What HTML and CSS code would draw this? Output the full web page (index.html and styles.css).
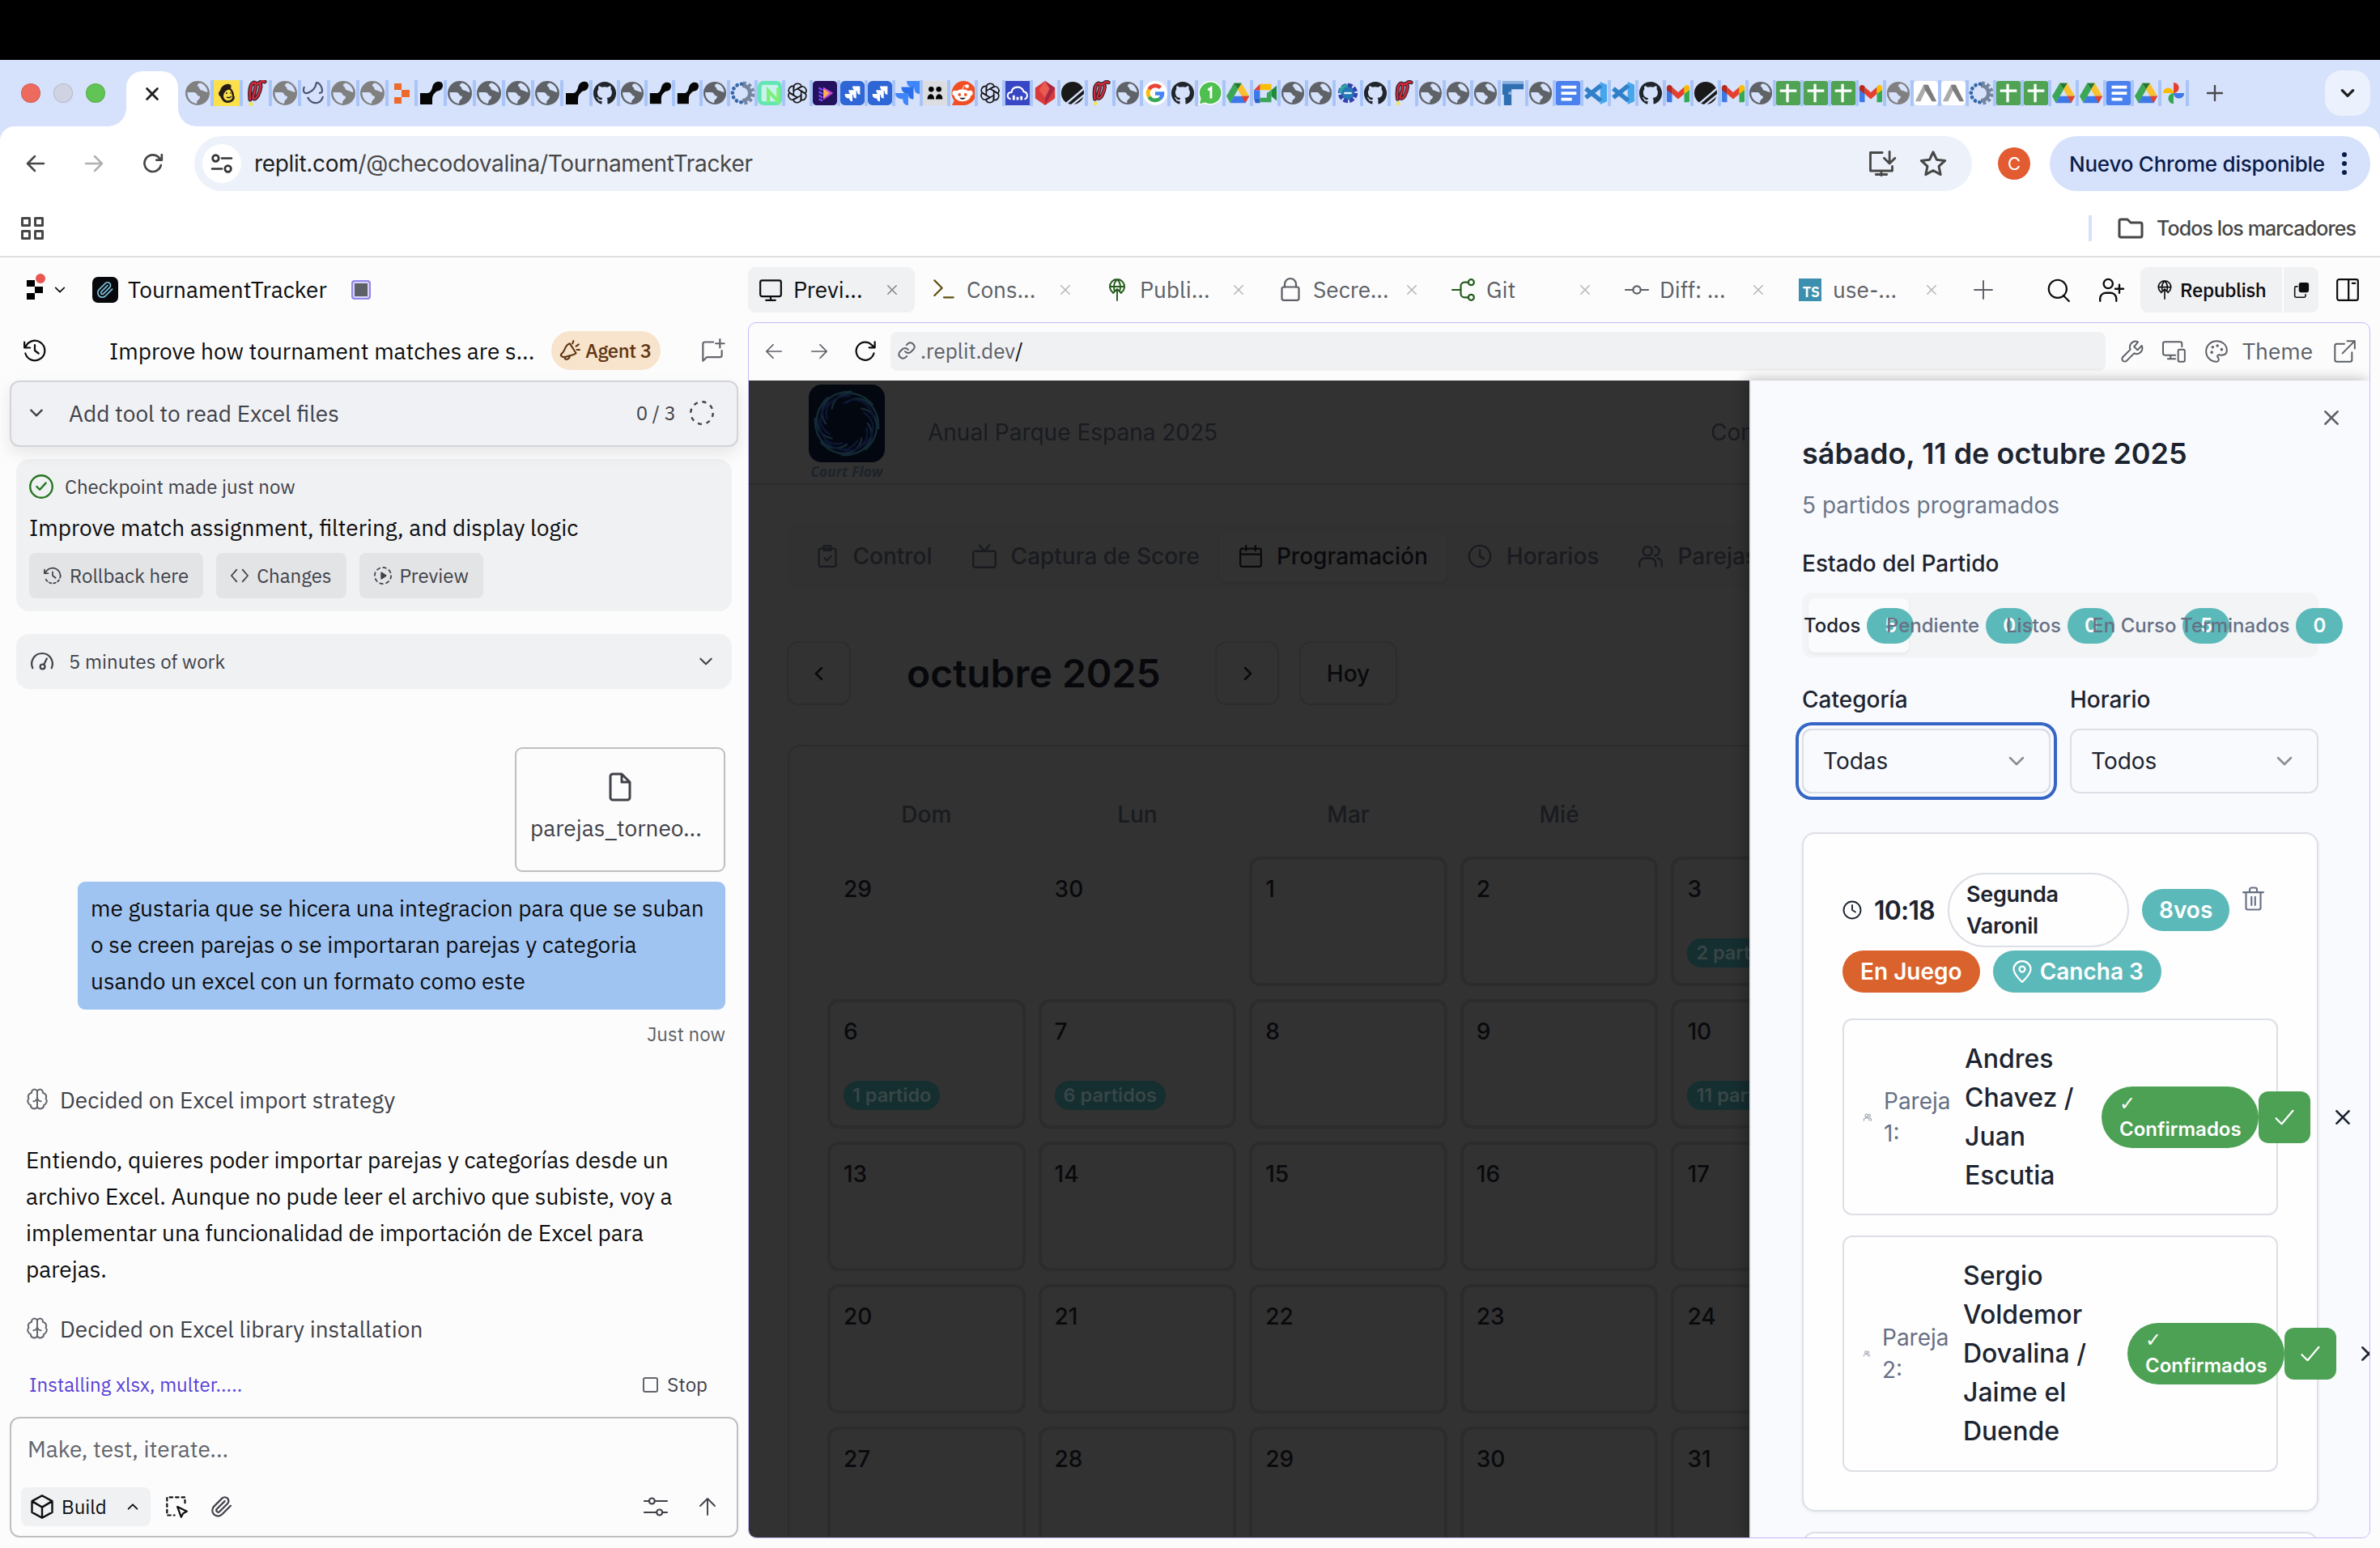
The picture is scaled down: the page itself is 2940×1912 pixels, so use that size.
FILE: index.html
```html
<!DOCTYPE html>
<html lang="es">
<head>
<meta charset="utf-8">
<title>TournamentTracker - Replit</title>
<link rel="stylesheet" href="styles.css">
</head>
<body>
<svg class="defs" aria-hidden="true">
  <symbol id="f-globe" viewBox="0 0 32 32"><circle cx="16" cy="16" r="15" fill="#5f6368"/><path d="M3.500 15h8c4 0 3 4 6 4.500 3 .5 1 4-1 5-1.500 1-1 3-1.500 4.500C8 28 3 22 3.500 15zM19 3.500c-3 1-4 3-2 4.500s1 4 4 4.500 4 2 7.500 2.500C28 9 24 4.500 19 3.500z" fill="#d6e1fb"/></symbol>
  <symbol id="f-globe2" viewBox="0 0 32 32"><circle cx="16" cy="16" r="15" fill="#808080"/><path d="M3.500 15h8c4 0 3 4 6 4.500 3 .5 1 4-1 5-1.500 1-1 3-1.500 4.500C8 28 3 22 3.500 15zM19 3.500c-3 1-4 3-2 4.500s1 4 4 4.500 4 2 7.500 2.500C28 9 24 4.500 19 3.500z" fill="#d6e1fb"/></symbol>
  <symbol id="f-chimp" viewBox="0 0 32 32"><path d="M0 0h32v32H0z" fill="#fbe04b"/><path d="M8 20c-3-2-2-6 0-7 1-5 6-9 11-8 3 0 3 3 2 5 3 3 4 6 4 9 3 4-2 9-8 9-5 0-7-4-9-8z" fill="#241c15"/><path d="M12 19c1-5 5-8 8-7 2 2 2 5 3 8 1 3-3 6-7 5-3-1-4-3-4-6z" fill="#fbe04b"/><path d="M15 16h2M20 16h1M16 21c2 1 4 1 6-1" stroke="#241c15" stroke-width="1.500" fill="none"/></symbol>
  <symbol id="f-pin" viewBox="0 0 32 32"><path d="M9 24C8 15 9 6 12 4c3-3 5 1 3 8s-4 11-1 11 7-7 8-15c0-4-3-5-6-3m5-2c2-2 4-2 6-1" stroke="#30242a" stroke-width="5" fill="none" stroke-linecap="round"/><path d="M9 24C8 15 9 6 12 4c3-3 5 1 3 8s-4 11-1 11 7-7 8-15c0-4-3-5-6-3m5-2c2-2 4-2 6-1" stroke="#d5283c" stroke-width="2.500" fill="none" stroke-linecap="round"/><circle cx="10" cy="29.500" r="2.500" fill="#f1e64a"/></symbol>
  <symbol id="f-curve" viewBox="0 0 32 32"><path d="M4 8c-3 7 1 10 6 7 5-2 8-7 9-12 4 0 7 6 7 10 0 3-2 3-4 3M8 21c2 5 7 8 12 7 4-1 6-4 7-8" stroke="#4b5678" stroke-width="2.200" fill="none"/></symbol>
  <symbol id="f-replit" viewBox="0 0 32 32"><path d="M7 4h9v8H7zM16 12h10v9H16zM7 21h9v8H7z" fill="#ec6a2c"/></symbol>
  <symbol id="f-hook" viewBox="0 0 32 32"><path d="M3 16h9c3 0 5-3 6-7 1-5 5-8 9-7 4 0 5 5 3 8-2 4-5 2-8 5-2 2-4 4-4 8v7H3z" fill="#050505"/></symbol>
  <symbol id="f-github" viewBox="0 0 32 32"><path d="M16 1C7.500 1 1 8 1 16c0 7 4.300 12.400 10.200 14.500.8.100 1-.4 1-.8v-3.200c-4 .9-5-1.800-5-1.800-.7-1.700-1.700-2.200-1.700-2.200-1.300-.9.100-.9.100-.9 1.500.1 2.300 1.600 2.300 1.600 1.300 2.300 3.500 1.600 4.300 1.200.1-1 .5-1.600.9-2-3.300-.4-6.800-1.700-6.800-7.500 0-1.600.6-3 1.600-4-.2-.4-.7-2 .1-4.100 0 0 1.200-.4 4.100 1.500a14 14 0 0 1 7.600 0c2.900-1.900 4.100-1.500 4.100-1.500.8 2.100.3 3.700.1 4.100 1 1 1.600 2.400 1.600 4 0 5.800-3.500 7.100-6.800 7.500.5.500 1 1.400 1 2.800v4.500c0 .4.300.9 1 .8C26.700 28.400 31 23 31 16 31 8 24.500 1 16 1z" fill="#20252b"/></symbol>
  <symbol id="f-gear" viewBox="0 0 32 32"><path d="M16 6a10 10 0 0 1 0 20" fill="none" stroke="#76859e" stroke-width="5"/><path d="M17 3a13 13 0 0 1 0 26" fill="none" stroke="#76859e" stroke-width="5" stroke-dasharray="4 3"/><path d="M15 4a12 12 0 0 0 0 24" fill="none" stroke="#3568a8" stroke-width="5" stroke-linecap="round" stroke-dasharray=".1 6"/></symbol>
  <symbol id="f-neon" viewBox="0 0 32 32"><rect x="2.500" y="2.500" width="27" height="27" rx="5" fill="#c9f2ee" stroke="#62e6b4" stroke-width="5"/><path d="M14 29V13l13 14V9" fill="none" stroke="#7df07a" stroke-width="4.500"/></symbol>
  <symbol id="f-openai" viewBox="0 0 32 32"><g fill="none" stroke="#161616" stroke-width="1.700"><path id="petal" d="M11 19V9c0-7 9-7 10.500-1.500L15 11"/><use href="#petal" transform="rotate(60 16 16)"/><use href="#petal" transform="rotate(120 16 16)"/><use href="#petal" transform="rotate(180 16 16)"/><use href="#petal" transform="rotate(240 16 16)"/><use href="#petal" transform="rotate(300 16 16)"/></g></symbol>
  <symbol id="f-play" viewBox="0 0 32 32"><rect width="32" height="32" rx="5" fill="#23115e"/><path d="M14 8l13 8-13 9z" fill="#c24be0"/><path d="M14 10l8 6-8 7z" fill="#ffb24a"/><path d="M8 9l5 3M8 14l5 3M8 19l5 3M8 24l5 2" stroke="#7b4bef" stroke-width="2.500"/></symbol>
  <symbol id="f-jira" viewBox="0 0 32 32"><rect width="32" height="32" rx="6" fill="#2f66d6"/><path d="M16 7h10v11c-3 0-4-2-4-5-3 0-6-2-6-6zM11 12h10v11c-3 0-4-2-4-5-4 0-6-2-6-6zM6 17h10v10c-3 0-4-2-4-4-4 0-6-2-6-6z" fill="#fff"/></symbol>
  <symbol id="f-jira2" viewBox="0 0 32 32"><path d="M15 0h17v17c-5 0-7-3-7-8-6 0-10-3-10-9z" fill="#3f86fb"/><path d="M8 8h16v16c-5 0-7-3-7-7-5 0-9-3-9-9z" fill="#2c6fea"/><path d="M0 16h17v16c-5 0-7-3-7-8-6 0-10-3-10-8z" fill="#3f86fb"/></symbol>
  <symbol id="f-people" viewBox="0 0 32 32"><rect width="32" height="32" rx="3" fill="#dcdde1"/><circle cx="11" cy="11" r="3.500"/><circle cx="21" cy="11" r="3.500"/><path d="M6 24c0-9 9-9 9 0zM17 24c0-9 9-9 9 0z"/></symbol>
  <symbol id="f-reddit" viewBox="0 0 32 32"><path d="M2 32l3-6A16 16 0 1 1 16 32z" fill="#f04f23"/><circle cx="6" cy="16" r="3.500" fill="#fff"/><circle cx="26" cy="16" r="3.500" fill="#fff"/><ellipse cx="16" cy="19" rx="11" ry="8" fill="#fff"/><circle cx="22" cy="7" r="2.500" fill="#fff"/><path d="M16 11l2-5 4 1" stroke="#fff" fill="none"/><circle cx="12" cy="18" r="2" fill="#f04f23"/><circle cx="20" cy="18" r="2" fill="#f04f23"/><path d="M12 22c2 3 6 3 8 0z" fill="#222"/></symbol>
  <symbol id="f-cloud" viewBox="0 0 32 32"><path d="M0 0h32v32H0z" fill="#3646c4"/><path d="M7 24c-6-2-5-9 1-9 1-9 14-9 16-1 6 1 6 9 1 10" fill="none" stroke="#fff" stroke-width="2.200"/><path d="M11 25v-6M16 25v-4M21 25v-5" stroke="#fff" stroke-width="3"/></symbol>
  <symbol id="f-gem" viewBox="0 0 32 32"><path d="M16 0l13 9v14l-13 9-13-9V9z" fill="#d93a3c"/><path d="M16 0l13 9-8 14-5 9z" fill="#a52846"/><path d="M16 0l6 10-6 12-8-10z" fill="#e95a50"/></symbol>
  <symbol id="f-stripe" viewBox="0 0 32 32"><circle cx="16" cy="16" r="15" fill="#191919"/><path d="M4 33L32 9M12 34L33 17M20 34l14-11" stroke="#d6e1fb" stroke-width="2.500"/></symbol>
  <symbol id="f-google" viewBox="0 0 32 32"><circle cx="16" cy="16" r="16" fill="#fff"/><g fill="none" stroke-width="5"><path d="M8 11a9.500 9.500 0 0 1 15-2" stroke="#ea4335"/><path d="M8 21a9.500 9.500 0 0 1 0-10" stroke="#fbbc05"/><path d="M22 23.500A9.500 9.500 0 0 1 8 21" stroke="#34a853"/><path d="M16 16.500h9.500c0 3-1.500 5.500-3.500 7" stroke="#4285f4"/></g></symbol>
  <symbol id="f-whats" viewBox="0 0 32 32"><path d="M1 31l2-8A15 15 0 1 1 9 29z" fill="#4fbf50" stroke="#fff" stroke-width="1.500"/><path d="M13 12l4-3v14" fill="none" stroke="#fff" stroke-width="3"/></symbol>
  <symbol id="f-drive" viewBox="0 0 32 32"><path d="M11 3h10L10 22l-4 7-5-9z" fill="#3aa757"/><path d="M11 3h10l10 17H21z" fill="#fbc02d"/><path d="M6 29l5-9h20l-5 9z" fill="#3c78e7"/><path d="M21 20h10l-5 9z" fill="#e5402f"/><path d="M11 3l5 8 5-8z" fill="#1e7a3a"/></symbol>
  <symbol id="f-meet" viewBox="0 0 32 32"><path d="M9 4h15v8H9z" fill="#fbbc04"/><path d="M1 12h8v11H1z" fill="#3c78e7"/><path d="M1 12l8-8v8z" fill="#e5402f"/><path d="M1 23h8v6H3z" fill="#2a5fd0"/><path d="M9 22h9v-6l6-4v16H9z" fill="#3aa757"/><path d="M24 12l7-6v20l-7-6z" fill="#1e8a3e"/></symbol>
  <symbol id="f-sim" viewBox="0 0 32 32"><circle cx="16" cy="16" r="9" fill="#2677b5"/><circle cx="16" cy="16" r="10.500" fill="none" stroke="#3340b0" stroke-width="5" stroke-dasharray="6 2.200"/><path d="M6 16a10 10 0 0 1 10-10" stroke="#2aa6a0" stroke-width="4" fill="none"/><path d="M11 16h10" stroke="#e8f4ff" stroke-width="2.500"/></symbol>
  <symbol id="f-tee" viewBox="0 0 32 32"><path d="M2 2h28v9H14v21H4V18H2z" fill="#2e6fb2"/><path d="M2 0h28v4H2zM10 14h4v4h-4z" fill="#8db1de"/></symbol>
  <symbol id="f-docs" viewBox="0 0 32 32"><rect width="32" height="32" rx="3" fill="#4b80ef"/><path d="M7 8h20M7 16h20M7 24h14" stroke="#fff" stroke-width="4"/></symbol>
  <symbol id="f-code" viewBox="0 0 32 32"><path d="M22 1l9 4v22l-9 4z" fill="#45a6ec"/><path d="M23 6L3 22M23 26L3 10" stroke="#2f80c8" stroke-width="6"/></symbol>
  <symbol id="f-gmail" viewBox="0 0 32 32"><path d="M1 8h7v20H3a2 2 0 0 1-2-2z" fill="#3c78e7"/><path d="M24 8h7v18a2 2 0 0 1-2 2h-5z" fill="#34a853"/><path d="M8 8l8 7 8-7v9l-8 7-8-7z" fill="#e5402f"/><path d="M1 9c0-4 4-5 7-2v10l-7-5z" fill="#b8281c"/><path d="M31 9c0-4-4-5-7-2v10l7-5z" fill="#fbbc04"/></symbol>
  <symbol id="f-sheet" viewBox="0 0 32 32"><rect width="32" height="32" rx="3" fill="#4fa353"/><path d="M5 13h22M15 4v24" stroke="#fff" stroke-width="3.500"/></symbol>
  <symbol id="f-peak" viewBox="0 0 32 32"><rect width="32" height="32" rx="5" fill="#fff"/><path d="M2 27L13 5h6L9 27z" fill="#aaa"/><path d="M13 5h6l11 22h-6L15 12z" fill="#7c7c7c"/></symbol>
  <symbol id="f-photos" viewBox="0 0 32 32"><path d="M16 16V2a7 7 0 0 1 0 14z" fill="#e5402f"/><path d="M16 16h14a7 7 0 0 1-14 0z" fill="#3c78e7"/><path d="M16 16v14a7 7 0 0 1 0-14z" fill="#34a853"/><path d="M16 16H2a7 7 0 0 1 14 0z" fill="#fbbc04"/></symbol>

  <symbol id="x" viewBox="0 0 24 24"><path d="M5 5l14 14M19 5L5 19"/></symbol>
  <symbol id="down" viewBox="0 0 24 24"><path d="M4 8l8 8 8-8"/></symbol>
  <symbol id="up" viewBox="0 0 24 24"><path d="M4 16l8-8 8 8"/></symbol>
  <symbol id="left" viewBox="0 0 24 24"><path d="M15 5l-7 7 7 7"/></symbol>
  <symbol id="right" viewBox="0 0 24 24"><path d="M9 5l7 7-7 7"/></symbol>
  <symbol id="arrow-l" viewBox="0 0 24 24"><path d="M22 12H3M11 3l-9 9 9 9"/></symbol>
  <symbol id="arrow-r" viewBox="0 0 24 24"><path d="M2 12h19M13 3l9 9-9 9"/></symbol>
  <symbol id="arrow-u" viewBox="0 0 24 24"><path d="M12 22V3M3 11l9-9 9 9"/></symbol>
  <symbol id="reload" viewBox="0 0 24 24"><path d="M21 14a9.500 9.500 0 1 1-2-8.500L22 8M22 2v6h-6"/></symbol>
  <symbol id="plus" viewBox="0 0 24 24"><path d="M12 1v22M1 12h22"/></symbol>
  <symbol id="history" viewBox="0 0 24 24"><path d="M1 3v6h6M2 9a10.500 10.500 0 1 1 0 6M12 6v6l4 3"/></symbol>
  <symbol id="rollback" viewBox="0 0 24 24"><path d="M1 4v5h5M2 9a10.500 10.500 0 0 1 20.500 3"/><path d="M22.500 12A10.500 10.500 0 0 1 2 15" stroke-dasharray="3 3"/><path d="M12 7v5l4 3"/></symbol>
  <symbol id="clock" viewBox="0 0 24 24"><circle cx="12" cy="12" r="10.500"/><path d="M12 6v6l4 2.500"/></symbol>
  <symbol id="check-c" viewBox="0 0 24 24"><circle cx="12" cy="12" r="11"/><path d="M7.500 12l3 3 6-6.500"/></symbol>
  <symbol id="check" viewBox="0 0 24 24"><path d="M3 13l6 6L21 5"/></symbol>
  <symbol id="brain" viewBox="0 0 24 24"><path d="M12 3C10 0 6 1 6 5 2 6 2 9 3 11c-2 2-1 6 2 7 0 4 5 5 7 2M12 3c2-3 6-2 6 2 4 1 4 4 3 6 2 2 1 6-2 7 0 4-5 5-7 2M12 3v17M8 14c2 0 4-2 4-4 0 2 2 4 4 4"/></symbol>
  <symbol id="clip" viewBox="0 0 24 24"><path d="M21.400 11l-9.200 9.200a6 6 0 0 1-8.500-8.500l8.600-8.600A4 4 0 1 1 18 8.800l-8.600 8.600a2 2 0 0 1-2.800-2.800l8.500-8.500"/></symbol>
  <symbol id="users" viewBox="0 0 24 24"><circle cx="9" cy="7" r="4.500"/><path d="M1 22v-3a5 5 0 0 1 5-5h6a5 5 0 0 1 5 5v3M16 2.500a4.500 4.500 0 0 1 0 9M19 14a5 5 0 0 1 4 5v3"/></symbol>
  <symbol id="globe-up" viewBox="0 0 24 28"><path d="M7 17.500a9 9 0 1 1 10 0M3 10h18M12 1c-6 6-4 12-3 15M12 1c6 6 4 12 3 15M12 13v14M7 18l5-5 5 5"/></symbol>
</svg>

<div class="notch"></div>

<header class="strip">
  <div class="lights"><i class="red"></i><i class="gray"></i><i class="green"></i></div>
  <div class="active-tab"><svg class="ic s22 w2"><use href="#x"/></svg></div>
  <div class="tabs">
    <b class="wide"><svg><use href="#f-globe2"/></svg></b><b class="wide"><svg><use href="#f-chimp"/></svg></b><b class="wide"><svg><use href="#f-pin"/></svg></b><b class="wide"><svg><use href="#f-globe2"/></svg></b><b class="wide"><svg><use href="#f-curve"/></svg></b><b class="wide"><svg><use href="#f-globe2"/></svg></b><b class="wide"><svg><use href="#f-globe2"/></svg></b><b class="wide"><svg><use href="#f-replit"/></svg></b><b class="wide"><svg><use href="#f-hook"/></svg></b><b class="wide"><svg><use href="#f-globe"/></svg></b><b class="wide"><svg><use href="#f-globe"/></svg></b><b class="wide"><svg><use href="#f-globe"/></svg></b><b class="wide"><svg><use href="#f-globe"/></svg></b><b class="wide"><svg><use href="#f-hook"/></svg></b>
    <b><svg><use href="#f-github"/></svg></b><b><svg><use href="#f-globe"/></svg></b><b><svg><use href="#f-hook"/></svg></b><b><svg><use href="#f-hook"/></svg></b><b><svg><use href="#f-globe"/></svg></b><b><svg><use href="#f-gear"/></svg></b><b><svg><use href="#f-neon"/></svg></b><b><svg><use href="#f-openai"/></svg></b><b><svg><use href="#f-play"/></svg></b><b><svg><use href="#f-jira"/></svg></b><b><svg><use href="#f-jira"/></svg></b><b><svg><use href="#f-jira2"/></svg></b><b><svg><use href="#f-people"/></svg></b><b><svg><use href="#f-reddit"/></svg></b><b><svg><use href="#f-openai"/></svg></b><b><svg><use href="#f-cloud"/></svg></b><b><svg><use href="#f-gem"/></svg></b><b><svg><use href="#f-stripe"/></svg></b><b><svg><use href="#f-pin"/></svg></b><b><svg><use href="#f-globe"/></svg></b><b><svg><use href="#f-google"/></svg></b><b><svg><use href="#f-github"/></svg></b><b><svg><use href="#f-whats"/></svg></b><b><svg><use href="#f-drive"/></svg></b><b><svg><use href="#f-meet"/></svg></b><b><svg><use href="#f-globe"/></svg></b><b><svg><use href="#f-globe"/></svg></b><b><svg><use href="#f-sim"/></svg></b><b><svg><use href="#f-github"/></svg></b><b><svg><use href="#f-pin"/></svg></b><b><svg><use href="#f-globe"/></svg></b><b><svg><use href="#f-globe"/></svg></b><b><svg><use href="#f-globe"/></svg></b><b><svg><use href="#f-tee"/></svg></b><b><svg><use href="#f-globe"/></svg></b><b><svg><use href="#f-docs"/></svg></b><b><svg><use href="#f-code"/></svg></b><b><svg><use href="#f-code"/></svg></b><b><svg><use href="#f-github"/></svg></b><b><svg><use href="#f-gmail"/></svg></b><b><svg><use href="#f-stripe"/></svg></b><b><svg><use href="#f-gmail"/></svg></b><b><svg><use href="#f-globe"/></svg></b><b><svg><use href="#f-sheet"/></svg></b><b><svg><use href="#f-sheet"/></svg></b><b><svg><use href="#f-sheet"/></svg></b><b><svg><use href="#f-gmail"/></svg></b><b><svg><use href="#f-globe2"/></svg></b><b><svg><use href="#f-peak"/></svg></b><b><svg><use href="#f-peak"/></svg></b><b><svg><use href="#f-gear"/></svg></b><b><svg><use href="#f-sheet"/></svg></b><b><svg><use href="#f-sheet"/></svg></b><b><svg><use href="#f-drive"/></svg></b><b><svg><use href="#f-drive"/></svg></b><b><svg><use href="#f-docs"/></svg></b><b><svg><use href="#f-drive"/></svg></b><b><svg><use href="#f-photos"/></svg></b>
  </div>
  <svg class="ic new-tab w3"><use href="#plus"/></svg>
  <div class="tab-menu"><svg class="ic s20 w4"><use href="#down"/></svg></div>
</header>

<div class="toolbar-bg">
<div class="toolbar">
  <div class="nav-btns">
    <svg class="ic s24 w25"><use href="#arrow-l"/></svg>
    <svg class="ic s24 w25 dim"><use href="#arrow-r"/></svg>
    <svg class="ic s26 w25"><use href="#reload"/></svg>
  </div>
  <div class="omnibox">
    <span class="site"><svg class="ic s26 w25" viewBox="0 0 24 24"><circle cx="5" cy="6" r="3.500"/><path d="M12 6h11M1 18h11"/><circle cx="19" cy="18" r="3.500"/></svg></span>
    <span class="url">replit.com<em>/@checodovalina/TournamentTracker</em></span>
    <svg class="ic s34 w25 install" viewBox="0 0 32 32"><path d="M17 4H4v20h24v-5M16 24v5M10 28h12M25 3v12M19 10l6 6 6-6"/></svg>
    <svg class="ic s32 w25" viewBox="0 0 24 24"><path stroke-width="2" d="M12 2.500l2.900 6.300 6.900.8-5.100 4.700 1.400 6.800L12 17.700l-6.100 3.400 1.400-6.800-5.100-4.700 6.900-.8z"/></svg>
  </div>
  <span class="avatar">C</span>
  <div class="update"><span>Nuevo Chrome disponible</span><i class="dots"></i></div>
</div>
<div class="bookmarks">
  <svg class="ic s28" viewBox="0 0 28 28"><path stroke-width="3" d="M1.500 1.500h9v9h-9zM17.500 1.500h9v9h-9zM1.500 17.500h9v9h-9zM17.500 17.500h9v9h-9z"/></svg>
  <i class="bar"></i>
  <svg class="ic folder" viewBox="0 0 32 26"><path stroke-width="3" d="M2 23V4a2 2 0 0 1 2-2h8l4 4h12a2 2 0 0 1 2 2v14a2 2 0 0 1-2 2H4a2 2 0 0 1-2-1z"/></svg>
  <span>Todos los marcadores</span>
</div>
</div>

<main class="workspace">
  <section class="chat">
    <div class="app-row">
      <div class="logo"><svg viewBox="0 0 22 32"><path d="M0 8h10v8H0zM10 16h10v8H10zM0 24h10v8H0z"/><circle cx="17" cy="6" r="6" fill="#e95850"/></svg></div>
      <svg class="ic s16 w25"><use href="#down"/></svg>
      <span class="app-icon"><svg class="ic s22 w2"><use href="#clip"/></svg></span>
      <span class="app-name">TournamentTracker</span>
      <i class="stop-box"></i>
    </div>
    <div class="thread-row">
      <svg class="ic s28 w2"><use href="#history"/></svg>
      <span class="thread-name">Improve how tournament matches are s...</span>
      <span class="agent"><svg class="ic s26 w2" viewBox="0 0 24 24"><path d="M2 18c-1-1 0-2 2-4 3-3 2-8 8-10l7 11c-3 3-7 2-11 4-3 1-5 0-6-1zM6 20c0 3 5 3 6-2M15 4l1-3M19 7l3-2M20 11h3"/></svg>Agent 3</span>
      <svg class="ic s28 w2 soft" viewBox="0 0 24 24"><path d="M13 3H4a2 2 0 0 0-2 2v18l4-4h14a2 2 0 0 0 2-2v-5M20 0v9M15.500 4.500h9"/></svg>
    </div>
    <div class="task">
      <svg class="ic s20 w3"><use href="#down"/></svg>
      <span class="task-name">Add tool to read Excel files</span>
      <span class="count">0 / 3</span>
      <svg class="ic s30 w2" viewBox="0 0 24 24"><circle cx="12" cy="12" r="11" stroke-dasharray="4 4.640" stroke-linecap="butt"/></svg>
    </div>
    <div class="checkpoint">
      <div class="cp-head"><svg class="ic s30 w2"><use href="#check-c"/></svg><span>Checkpoint made just now</span></div>
      <p>Improve match assignment, filtering, and display logic</p>
      <div class="cp-btns">
        <span><svg class="ic s22 w2"><use href="#rollback"/></svg>Rollback here</span>
        <span><svg class="ic s22 w2" viewBox="0 0 24 24"><path d="M8 4l-7 8 7 8M16 4l7 8-7 8"/></svg>Changes</span>
        <span><svg class="ic s22 w2" viewBox="0 0 24 24"><circle cx="12" cy="12" r="11" stroke-dasharray="4 4.640"/><path d="M10 8l6 4-6 4z" fill="currentColor"/></svg>Preview</span>
      </div>
    </div>
    <div class="minutes">
      <svg class="ic s28 w2" viewBox="0 0 24 24"><path d="M2 19a11 11 0 1 1 20 0M14 15l3-6"/><circle cx="12.500" cy="17.500" r="2.500"/></svg>
      <span>5 minutes of work</span>
      <svg class="ic s20 w25"><use href="#down"/></svg>
    </div>
    <div class="file">
      <svg class="ic" viewBox="0 0 28 36"><path stroke-width="3" d="M16 2H5a3 3 0 0 0-3 3v26a3 3 0 0 0 3 3h18a3 3 0 0 0 3-3V12zM16 2v10h10"/></svg>
      <span>parejas_torneo...</span>
    </div>
    <div class="bubble">me gustaria que se hicera una integracion para que se suban<br>o se creen parejas o se importaran parejas y categoria<br>usando un excel con un formato como este</div>
    <div class="when">Just now</div>
    <div class="step"><svg class="ic s28 w15"><use href="#brain"/></svg><span>Decided on Excel import strategy</span></div>
    <p class="reply">Entiendo, quieres poder importar parejas y categorías desde un<br>archivo Excel. Aunque no pude leer el archivo que subiste, voy a<br>implementar una funcionalidad de importación de Excel para<br>parejas.</p>
    <div class="step second"><svg class="ic s28 w15"><use href="#brain"/></svg><span>Decided on Excel library installation</span></div>
    <div class="status"><span class="installing">Installing xlsx, multer.....</span><i></i><span>Stop</span></div>
    <div class="composer">
      <div class="placeholder">Make, test, iterate...</div>
      <div class="tools">
        <span class="build"><svg class="ic s30 w2" viewBox="0 0 24 24"><path d="M12 1l10 5.500v11L12 23 2 17.500v-11zM2 6.500l10 6 10-6M12 12.500V23"/></svg><span>Build</span><svg class="ic s16 w3"><use href="#up"/></svg></span>
        <svg class="ic s28 w2 dark" viewBox="0 0 24 24"><path d="M21 8V2H2v19h8" stroke-dasharray="3 3.400"/><path d="M13 12l10 5-4 2-2 4z"/></svg>
        <svg class="ic s28 w2"><use href="#clip"/></svg>
        <svg class="ic s28 w2 push" viewBox="0 0 24 24"><path d="M0 6h5M11 6h13M0 18h13M19 18h5"/><circle cx="8" cy="6" r="3"/><circle cx="16" cy="18" r="3"/></svg>
        <svg class="ic s24 w2"><use href="#arrow-u"/></svg>
      </div>
    </div>
  </section>

  <section class="pane">
    <div class="pane-tabs">
      <div class="ptab on"><svg class="ic s28 w2" viewBox="0 0 24 24"><rect x="1" y="2" width="22" height="17" rx="2"/><path d="M12 19v4M7 23h10"/></svg><span>Previ...</span><svg class="ic s18 w2 close"><use href="#x"/></svg></div>
      <div class="ptab"><svg class="ic s28 w2 olive" viewBox="0 0 24 24"><path d="M2 2l8 8-8 8M12 20h10"/></svg><span>Cons...</span><svg class="ic s18 w2 close"><use href="#x"/></svg></div>
      <div class="ptab"><svg class="ic s28 w2 leaf"><use href="#globe-up"/></svg><span>Publi...</span><svg class="ic s18 w2 close"><use href="#x"/></svg></div>
      <div class="ptab"><svg class="ic s28 w2" viewBox="0 0 24 24"><rect x="3" y="9" width="18" height="14" rx="2"/><path d="M6 9V6a6 6 0 0 1 12 0v3"/></svg><span>Secre...</span><svg class="ic s18 w2 close"><use href="#x"/></svg></div>
      <div class="ptab"><svg class="ic s28 w2 leaf" viewBox="0 0 24 24"><path d="M0 12h9M17 4h-4a4 4 0 0 0-4 4v8a4 4 0 0 0 4 4h4"/><circle cx="20" cy="4" r="3"/><circle cx="20" cy="20" r="3"/></svg><span>Git</span><svg class="ic s18 w2 close"><use href="#x"/></svg></div>
      <div class="ptab"><svg class="ic s28 w2" viewBox="0 0 24 24"><path d="M0 12h8M16 12h8"/><circle cx="12" cy="12" r="4"/></svg><span>Diff: ...</span><svg class="ic s18 w2 close"><use href="#x"/></svg></div>
      <div class="ptab"><b class="ts">TS</b><span>use-...</span><svg class="ic s18 w2 close"><use href="#x"/></svg></div>
      <svg class="ic s24 w2 add"><use href="#plus"/></svg>
      <div class="actions">
        <svg class="ic s28 w2" viewBox="0 0 24 24"><circle cx="11" cy="11" r="9.500"/><path d="M17 18l6 6"/></svg>
        <svg class="ic s30 w2" viewBox="0 0 24 24"><circle cx="9" cy="6" r="4.500"/><path d="M1 23v-3a6 6 0 0 1 6-5h4a6 6 0 0 1 6 5v3M20 7v8M16 11h8"/></svg>
        <span class="republish"><svg class="ic s24 w2"><use href="#globe-up"/></svg>Republish</span>
        <span class="copy"><svg class="ic s20 w2" viewBox="0 0 24 24"><path d="M6 7H4a2 2 0 0 0-2 2v12a2 2 0 0 0 2 2h12a2 2 0 0 0 2-2v-2"/><rect x="9" y="2" width="13" height="13" rx="2" fill="currentColor"/></svg></span>
        <svg class="ic s28 w2" viewBox="0 0 24 24"><rect x="1" y="1" width="22" height="22" rx="2"/><path d="M13 1v22M17 5h3"/></svg>
      </div>
    </div>
    <div class="webview">
      <div class="address">
        <svg class="ic s22 w2"><use href="#arrow-l"/></svg>
        <svg class="ic s22 w2"><use href="#arrow-r"/></svg>
        <svg class="ic s28 w2 black"><use href="#reload"/></svg>
        <div class="path"><svg class="ic s24 w2" viewBox="0 0 24 24"><path d="M10 13a5 5 0 0 0 7.500.5l3-3a5 5 0 0 0-7-7l-1.700 1.700M14 11a5 5 0 0 0-7.500-.5l-3 3a5 5 0 0 0 7 7l1.700-1.700"/></svg><span>.replit.dev<b>/</b></span></div>
        <svg class="ic s28 w15" viewBox="0 0 24 24"><path d="M15 6a1 1 0 0 0 0 2l1.500 1.500a1 1 0 0 0 2 0L22 6a6 6 0 0 1-8 8l-8 8a2.500 2.500 0 0 1-4-4l8-8a6 6 0 0 1 8-8z"/></svg>
        <svg class="ic s28 w15" viewBox="0 0 24 24"><path d="M20 7V4a2 2 0 0 0-2-2H2a2 2 0 0 0-2 2v10a2 2 0 0 0 2 2h11M8 16v4M5 20h8"/><rect x="16" y="10" width="7" height="13" rx="1.500"/></svg>
        <svg class="ic s28 w15" viewBox="0 0 24 24"><path d="M12 23C6 23 1 18 1 12S6 1 12 1s11 4 11 10c0 4-3 5-6 5-4-1-5 1-3 3 1 2 0 4-2 4z"/><circle cx="7" cy="13" r=".7"/><circle cx="8" cy="7.500" r=".7"/><circle cx="13" cy="6" r=".7"/><circle cx="17.500" cy="10" r=".7"/></svg>
        <span class="theme">Theme</span>
        <svg class="ic s28 w15" viewBox="0 0 24 24"><path d="M12 4H4a2 2 0 0 0-2 2v15a2 2 0 0 0 2 2h14a2 2 0 0 0 2-2v-8M15 1h8v8M10 14L23 1"/></svg>
      </div>
      <div class="stage">
        <div class="site-page">
          <div class="site-head">
            <div class="brand">
              <svg viewBox="0 0 94 96"><rect width="94" height="96" rx="16" fill="#03070f"/><g fill="none" stroke-linecap="round"><path id="arm" d="M47 22C66 8 88 28 86 54" stroke="#132a35" stroke-width="2.500"/><use href="#arm" transform="rotate(45 47 48)"/><use href="#arm" transform="rotate(90 47 48)"/><use href="#arm" transform="rotate(135 47 48)"/><use href="#arm" transform="rotate(180 47 48)"/><use href="#arm" transform="rotate(225 47 48)"/><use href="#arm" transform="rotate(270 47 48)"/><use href="#arm" transform="rotate(315 47 48)"/><path id="arm2" d="M44 23C58 14 74 20 80 40" stroke="#0d1633" stroke-width="2.500"/><use href="#arm2" transform="rotate(65 47 48)"/><use href="#arm2" transform="rotate(110 47 48)"/><use href="#arm2" transform="rotate(155 47 48)"/><use href="#arm2" transform="rotate(200 47 48)"/><use href="#arm2" transform="rotate(245 47 48)"/><use href="#arm2" transform="rotate(290 47 48)"/></g></svg>
              <span>Court Flow</span>
            </div>
            <span class="club">Anual Parque Espana 2025</span>
            <span class="right-link">Control</span>
          </div>
          <div class="site-nav">
            <span><svg class="ic s28 w2" viewBox="0 0 24 24"><rect x="3" y="4" width="18" height="19" rx="2"/><rect x="8" y="1" width="8" height="5" rx="1"/><path d="M9 14l2.500 2.500L16 12"/></svg>Control</span>
            <span><svg class="ic s30 w2" viewBox="0 0 24 24"><rect x="1" y="7" width="22" height="16" rx="2"/><path d="M7 1l5 6 5-6"/></svg>Captura de Score</span>
            <span class="cur"><svg class="ic s28 w2" viewBox="0 0 24 24"><rect x="1" y="4" width="22" height="19" rx="2"/><path d="M1 10h22M7 1v5M17 1v5"/></svg>Programación</span>
            <span><svg class="ic s30 w2"><use href="#clock"/></svg>Horarios</span>
            <span><svg class="ic s30 w2"><use href="#users"/></svg>Parejas</span>
          </div>
          <div class="month">
            <span class="mbtn"><svg class="ic s24 w25"><use href="#left"/></svg></span>
            <h2>octubre 2025</h2>
            <span class="mbtn"><svg class="ic s24 w25"><use href="#right"/></svg></span>
            <span class="mbtn today">Hoy</span>
          </div>
          <div class="calendar">
            <div class="grid days"><span>Dom</span><span>Lun</span><span>Mar</span><span>Mié</span><span>Jue</span><span>Vie</span><span>Sáb</span></div>
            <div class="grid cells">
              <div class="day out">29</div><div class="day out">30</div><div class="day">1</div><div class="day">2</div><div class="day">3<em>2 partidos</em></div><div class="day">4</div><div class="day">5</div>
              <div class="day">6<em>1 partido</em></div><div class="day">7<em>6 partidos</em></div><div class="day">8</div><div class="day">9</div><div class="day">10<em>11 partidos</em></div><div class="day">11</div><div class="day">12</div>
              <div class="day">13</div><div class="day">14</div><div class="day">15</div><div class="day">16</div><div class="day">17</div><div class="day">18</div><div class="day">19</div>
              <div class="day">20</div><div class="day">21</div><div class="day">22</div><div class="day">23</div><div class="day">24</div><div class="day">25</div><div class="day">26</div>
              <div class="day">27</div><div class="day">28</div><div class="day">29</div><div class="day">30</div><div class="day">31</div><div class="day out">1</div><div class="day out">2</div>
            </div>
          </div>
        </div>
        <aside class="sheet">
          <div class="sheet-close"><svg class="ic s26 w25"><use href="#x"/></svg></div>
          <h1>sábado, 11 de octubre 2025</h1>
          <p class="sub">5 partidos programados</p>
          <div class="label">Estado del Partido</div>
          <div class="states">
            <div class="sel"><span>Todos</span><b>5</b></div>
            <div><span>Pendiente</span><b>0</b></div>
            <div><span>Listos</span><b>0</b></div>
            <div><span>En Curso</span><b>5</b></div>
            <div><span>Terminados</span><b>0</b></div>
          </div>
          <div class="filters">
            <div><div class="label">Categoría</div><div class="select focus">Todas<svg class="ic s24 w25"><use href="#down"/></svg></div></div>
            <div><div class="label">Horario</div><div class="select">Todos<svg class="ic s24 w25"><use href="#down"/></svg></div></div>
          </div>
          <article class="match">
            <div class="m-row">
              <svg class="ic s24 w2"><use href="#clock"/></svg>
              <strong>10:18</strong>
              <span class="pill outline">Segunda Varonil</span>
              <span class="pill teal round">8vos</span>
              <svg class="ic trash w2" viewBox="0 0 24 26"><path d="M1 6h22M4 6v17a2 2 0 0 0 2 2h12a2 2 0 0 0 2-2V6M8 6V3a2 2 0 0 1 2-2h4a2 2 0 0 1 2 2v3M10 11v9M14 11v9"/></svg>
            </div>
            <div class="m-row2">
              <span class="pill orange">En Juego</span>
              <span class="pill teal"><svg class="ic s28 w2" viewBox="0 0 24 24"><path d="M12 23S3 15 3 9.500a9 8.500 0 0 1 18 0C21 15 12 23 12 23z"/><circle cx="12" cy="9.500" r="3"/></svg>Cancha 3</span>
            </div>
            <div class="pair">
              <svg class="ic s10 w2"><use href="#users"/></svg>
              <span class="who">Pareja<br>1:</span>
              <span class="names">Andres<br>Chavez /<br>Juan<br>Escutia</span>
              <span class="conf"><i>✓</i>Confirmados</span>
              <span class="ok"><svg class="ic s28 w2"><use href="#check"/></svg></span>
              <span class="no"><svg class="ic s26 w25"><use href="#x"/></svg></span>
            </div>
            <div class="pair two">
              <svg class="ic s10 w2"><use href="#users"/></svg>
              <span class="who">Pareja<br>2:</span>
              <span class="names">Sergio<br>Voldemor<br>Dovalina /<br>Jaime el<br>Duende</span>
              <span class="conf"><i>✓</i>Confirmados</span>
              <span class="ok"><svg class="ic s28 w2"><use href="#check"/></svg></span>
              <span class="no"><svg class="ic s26 w25"><use href="#x"/></svg></span>
            </div>
          </article>
          <article class="match next"></article>
        </aside>
      </div>
    </div>
  </section>
</main>
</body>
</html>
```
FILE: styles.css
```css
* { box-sizing: border-box; margin: 0; padding: 0; }
body { width: 2940px; height: 1912px; overflow: hidden; display: flex; flex-direction: column; background: #fcfcfc; font-family: Inter, "Liberation Sans", sans-serif; color: #1f1f1f; }
em, i, b { font-style: normal; }
.defs { position: absolute; width: 0; height: 0; }

/* icon sizes and stroke weights */
.ic { flex: none; fill: none; stroke: currentColor; stroke-width: 2; stroke-linecap: round; stroke-linejoin: round; overflow: visible; }
.s10 { width: 10px; height: 12px; } .s16 { width: 16px; height: 16px; } .s18 { width: 18px; height: 18px; }
.s20 { width: 20px; height: 20px; } .s22 { width: 22px; height: 22px; } .s24 { width: 24px; height: 24px; }
.s26 { width: 26px; height: 26px; } .s28 { width: 28px; height: 28px; } .s30 { width: 30px; height: 30px; }
.s32 { width: 36px; height: 36px; } .s34 { width: 36px; height: 36px; }
.w15 { stroke-width: 1.700; } .w2 { stroke-width: 1.900; } .w25 { stroke-width: 2.500; } .w3 { stroke-width: 2.800; } .w4 { stroke-width: 4; }

/* browser chrome */
.notch { height: 74px; background: #000; flex: none; }
.strip { height: 82px; flex: none; background: #d6e1fb; display: flex; align-items: center; padding-right: 12px; }
.lights { display: flex; gap: 16px; padding-left: 26px; width: 156px; }
.lights i { width: 24px; height: 24px; border-radius: 50%; border: 1px solid rgba(0,0,0,.12); }
.red { background: #ed6a5e; } .gray { background: #d0d4e2; } .green { background: #61c454; }
.active-tab { width: 64px; height: 68px; align-self: flex-end; background: #fff; border-radius: 20px 20px 0 0; display: flex; align-items: center; justify-content: center; padding-bottom: 12px; position: relative; }
.active-tab .ic { stroke-width: 3; }
.active-tab::before, .active-tab::after { content: ""; position: absolute; bottom: 0; width: 22px; height: 22px; }
.active-tab::before { right: 100%; background: radial-gradient(circle at 0 0, transparent 21.500px, #fff 22px); }
.active-tab::after { left: 100%; background: radial-gradient(circle at 100% 0, transparent 21.500px, #fff 22px); }
.tabs { display: flex; margin-left: 8px; }
.tabs b { width: 34px; height: 32px; border-right: 4px solid #a9c5f8; display: block; }
.tabs b.wide { width: 36px; }
.tabs svg { width: 100%; height: 32px; display: block; }
.new-tab { width: 20px; height: 20px; margin-left: 22px; color: #47484c; }
.tab-menu { margin-left: auto; width: 56px; height: 56px; border-radius: 20px; background: #ebf1fd; display: flex; align-items: center; justify-content: center; }
.toolbar-bg { background: #d6e1fb; height: 162px; flex: none; }
.toolbar { height: 92px; background: #fff; border-radius: 18px 18px 0 0; display: flex; align-items: center; padding-right: 12px; color: #474747; }
.nav-btns { width: 240px; padding-left: 32px; display: flex; gap: 48px; align-items: center; }
.nav-btns .dim { color: #b0b0b0; }
.omnibox { width: 2196px; height: 68px; border-radius: 34px; background: #edf1fa; display: flex; align-items: center; padding: 0 30px 0 10px; }
.site { width: 48px; height: 48px; border-radius: 50%; background: #fff; color: #333; display: flex; align-items: center; justify-content: center; margin-right: 16px; }
.url { font-size: 28px; letter-spacing: -.32px; flex: 1; color: #1f1f1f; }
.url em { color: #474747; }
.install { margin-right: 28px; }
.avatar { width: 40px; height: 40px; border-radius: 50%; background: #e25b31; color: #fff; font-size: 22px; display: flex; align-items: center; justify-content: center; margin: 0 24px 0 32px; }
.update { width: 396px; height: 68px; border-radius: 34px; background: #d6e1fb; color: #0b1c4a; display: flex; align-items: center; justify-content: space-between; padding: 0 29px 0 24px; font-size: 26px; font-weight: 500; letter-spacing: -.22px; }
.dots { width: 6px; height: 6px; border-radius: 50%; background: currentColor; box-shadow: 0 -11px, 0 11px; }
.bookmarks { height: 70px; background: #fff; border-bottom: 2px solid #dfdfe0; display: flex; align-items: center; padding: 0 29px 0 26px; color: #474747; font-size: 25px; font-weight: 500; }
.bar { width: 4px; height: 32px; margin-left: auto; background: #d6e1fb; }
.folder { width: 32px; height: 26px; margin: 0 16px 0 32px; }
.bookmarks span { white-space: nowrap; width: 247px; letter-spacing: -.9px; }

/* assistant column */
.workspace { flex: 1; display: flex; min-height: 0; }
.chat { width: 924px; padding: 0 12px; display: flex; flex-direction: column; font-family: "IBM Plex Sans", "Noto Sans", sans-serif; color: #0c0d0f; font-size: 28px; white-space: nowrap; }
.app-row { height: 79px; display: flex; align-items: center; padding-left: 21px; }
.logo { width: 33px; height: 32px; margin-top: -8px; }
.logo svg { width: 22px; height: 32px; display: block; overflow: visible; }
.app-icon { width: 32px; height: 32px; border-radius: 7px; background: #07090c; color: #7fbdd8; margin: 0 12px 0 32px; display: flex; align-items: center; justify-content: center; }
.app-name { width: 276px; }
.stop-box { width: 24px; height: 24px; border-radius: 4px; background: #5e6068; border: 2px solid #9386ee; box-shadow: inset 0 0 0 2px #d8d4f8; }
.thread-row { height: 73px; display: flex; align-items: center; padding: 0 0 1px 17px; }
.thread-name { margin-left: 78px; width: 546px; }
.agent { width: 135px; height: 48px; border-radius: 24px; background: #f8e3cc; color: #5e3511; display: flex; align-items: center; gap: 6px; padding-left: 10px; font-size: 24px; letter-spacing: -.4px; font-weight: 500; }
.thread-row .soft { margin-left: 50px; color: #64666d; }
.task { height: 82px; flex: none; background: #f0f1f4; border: 2px solid #d2d4d8; border-radius: 12px; box-shadow: 0 8px 20px rgba(0,0,0,.09); display: flex; align-items: center; padding: 0 28px 2px 21px; color: #404249; z-index: 1; }
.task-name { margin-left: 30px; flex: 1; }
.count { margin-right: 17px; font-size: 24px; }
.checkpoint { margin: 15px 8px 0; height: 188px; background: #f0f1f3; border-radius: 16px; padding: 14px 16px; color: #404249; }
.cp-head { display: flex; align-items: center; gap: 14px; height: 40px; font-size: 24px; }
.cp-head .ic { color: #24751f; }
.checkpoint p { color: #0c0d0f; height: 62px; line-height: 61px; }
.cp-btns { display: flex; gap: 16px; }
.cp-btns span { height: 56px; background: #e3e4e6; border-radius: 8px; display: flex; align-items: center; gap: 10px; padding: 0 18px; font-size: 24px; }
.minutes { margin: 28px 8px 0; height: 68px; background: #f0f1f3; border-radius: 16px; display: flex; align-items: center; padding: 0 22px 0 18px; color: #404249; font-size: 24px; }
.minutes span { flex: 1; margin-left: 19px; }
.file { margin: 72px 16px 0 auto; width: 260px; height: 154px; border: 2.500px solid #bfbfc0; border-radius: 9px; padding: 29px 17px 0; color: #404249; }
.file .ic { width: 28px; height: 36px; display: block; margin: 0 auto 14px; }
.bubble { margin: 12px 16px 0 auto; width: 800px; height: 158px; background: #a0c4f2; border-radius: 9px; padding: 11px 16px; line-height: 44.800px; }
.when { margin: 14px 16px 0 auto; line-height: 32px; font-size: 24px; color: #5c5f66; }
.step { margin: 45px 0 0 20px; height: 40px; display: flex; align-items: center; gap: 14px; color: #404249; }
.step .ic { color: #62656c; }
.reply { margin: 32px 0 0 20px; line-height: 45px; }
.step.second { margin-top: 31px; }
.status { margin: 29px 38px 0 24px; height: 40px; display: flex; align-items: center; font-size: 24px; color: #404249; }
.installing { color: #5a41d6; flex: 1; }
.status i { width: 19px; height: 19px; border: 2px solid #62656c; border-radius: 3px; margin-right: 11px; }
.composer { margin-top: 20px; height: 149px; flex: none; border: 2.500px solid #bfbfc0; border-radius: 12px; padding: 18px 12px 0; color: #404249; }
.placeholder { height: 40px; line-height: 40px; padding-left: 8px; color: #62656c; }
.tools { display: flex; align-items: center; height: 48px; margin-top: 27px; padding-right: 12px; }
.build { width: 160px; height: 48px; border-radius: 8px; background: #f0f1f3; color: #0c0d0f; display: flex; align-items: center; padding: 0 14px 0 11px; font-size: 24px; margin-right: 18px; }
.build span { flex: 1; margin-left: 9px; }
.dark { color: #0c0d0f; margin-right: 28px; }
.push { margin: 0 38px 0 auto; }

/* workspace pane */
.pane { width: 2004px; font-family: "IBM Plex Sans", "Noto Sans", sans-serif; white-space: nowrap; color: #5c5f66; }
.pane-tabs { height: 80px; display: flex; align-items: center; }
.ptab { width: 206px; height: 56px; margin-right: 8px; border-radius: 9px; display: flex; align-items: center; padding: 0 19px 0 14px; font-size: 28px; }
.ptab span { flex: 1; margin: -2px 0 0 14px; min-width: 0; }
.ptab .close { color: #b4b5b8; }
.ptab.on { background: #f0f1f3; color: #0c0d0f; }
.ptab.on .close { color: #808288; }
.olive { color: #5f4d0c; } .leaf { color: #245c1d; }
.ts { width: 28px; height: 28px; background: #3c8fae; color: #fff; font: 600 18px/34px "IBM Plex Sans", "Noto Sans", sans-serif; text-align: right; padding-right: 2px; overflow: hidden; }
.add { margin-left: 16px; }
.actions { margin-left: auto; display: flex; align-items: center; color: #0c0d0f; padding-right: 14px; }
.actions > .ic:first-child { margin-right: 36px; }
.actions > .ic:nth-child(2) { margin-right: 21px; }
.republish { width: 175px; height: 56px; background: #f0f1f3; border-radius: 9px 0 0 9px; display: flex; align-items: center; gap: 7px; padding-left: 18px; font-size: 24px; letter-spacing: -.4px; font-weight: 500; }
.copy { width: 43px; height: 56px; background: #f0f1f3; border-radius: 0 9px 9px 0; margin: 0 22px 0 2px; display: flex; align-items: center; justify-content: center; }
.webview { height: 1502px; border: 1px solid #c3bbfb; border-radius: 10px; overflow: hidden; background: #fcfcfc; }
.address { height: 71px; display: flex; align-items: center; padding: 0 17px 1px 20px; }
.address .ic:nth-child(2) { margin: 0 32px 0 34px; }
.black { color: #0c0d0f; }
.path { width: 1501px; height: 48px; background: #f0f1f3; border-radius: 8px; margin: 0 19px 0 17px; display: flex; align-items: center; gap: 5px; padding: 0 0 2px 8px; font-size: 26px; }
.path b { color: #0c0d0f; font-weight: 400; }
.address > .path + .ic { margin-right: 24px; }
.address > .path + .ic + .ic { margin-right: 24px; }
.theme { flex: 1; margin: -2px 0 0 18px; font-size: 28px; }

/* dimmed tournament page */
.stage { display: flex; height: 1430px; font-family: Inter, sans-serif; }
.site-page { width: 1236px; background: #323232; overflow: hidden; color: #090a0d; font-size: 28px; font-weight: 500; }
.site-page > * { width: 2002px; }
.site-head { height: 129px; border-bottom: 2px solid #2b2b2c; display: flex; color: #191b20; font-weight: 400; }
.brand { margin: 5px 0 0 74px; width: 94px; }
.brand svg { width: 94px; height: 96px; display: block; }
.brand span { display: block; font: italic 700 17px/24px "Open Sans", sans-serif; color: #1c232b; letter-spacing: .3px; text-align: center; }
.club { margin-left: 53px; line-height: 128px; width: 967px; }
.right-link { line-height: 128px; }
.site-nav { margin: 49px 0 0 47px; height: 78px; border-radius: 12px; background: #313131; display: flex; align-items: center; padding-left: 11px; color: #191b20; }
.site-nav span { display: flex; align-items: center; gap: 18px; height: 64px; padding: 0 24.500px; }
.site-nav .cur { background: #323232; border-radius: 8px; color: #090a0d; box-shadow: 0 1px 2px rgba(0,0,0,.12); }
.month { margin: 66px 0 0 47px; display: flex; height: 79px; }
.month h2 { width: 450px; padding-left: 69px; line-height: 79px; font-size: 48px; font-weight: 600; color: #07080b; }
.mbtn { width: 79px; height: 79px; border: 2px solid #2c2c2d; border-radius: 14px; display: flex; align-items: center; justify-content: center; }
.mbtn.today { width: 121px; margin-left: 25px; }
.calendar { margin: 49px 0 0 48px; border: 2px solid #2c2c2d; border-radius: 16px; height: 1200px; padding: 63px 47px 0; }
.grid { display: grid; grid-template-columns: repeat(7, 244.600px); gap: 16px; }
.days { text-align: center; line-height: 43px; color: #191b20; height: 73px; }
.day { height: 160px; border: 4px solid #2c2c2d; border-radius: 14px; padding: 16px 16px 0; line-height: 40px; }
.day.out { border-color: transparent; }
.day em { display: block; width: max-content; height: 36px; margin-top: 41px; padding: 0 11px; border-radius: 18px; background: #152e30; color: #384647; font-size: 23.500px; font-weight: 600; line-height: 36px; }

/* match sheet */
.sheet { width: 766px; background: #f9fafd; border-left: 2px solid #e6e8ec; padding: 0 63px 0 63px; color: #1d2430; font-size: 28px; overflow: hidden; white-space: nowrap; box-shadow: -4px 0 16px rgba(0,0,0,.3); z-index: 1; }
.sheet-close { display: flex; justify-content: flex-end; margin-right: -29px; padding-top: 33px; height: 69px; color: #5d6067; }
.sheet h1 { font-size: 36px; font-weight: 600; line-height: 42px; }
.sub { color: #6b7688; line-height: 40px; margin-top: 23px; }
.label { line-height: 40px; font-weight: 500; }
.sub + .label { margin-top: 32px; }
.states { margin-top: 16px; height: 80px; background: #f3f4f6; border-radius: 12px; display: grid; grid-template-columns: repeat(5, 1fr); padding: 7px 8px; }
.states div { display: flex; align-items: center; justify-content: center; gap: 8px; min-width: 0; height: 67px; font-size: 24px; font-weight: 500; color: #667085; border-radius: 8px; }
.states .sel { background: #fafbfd; color: #1d2430; box-shadow: 0 2px 4px rgba(0,0,0,.06); }
.states b { flex: none; width: 58px; height: 44px; border-radius: 22px; background: #5cb9b9; color: #fff; font-weight: 600; display: flex; align-items: center; justify-content: center; }
.filters { display: grid; grid-template-columns: 1fr 1fr; gap: 24px; margin-top: 32px; }
.select { margin-top: 16px; height: 80px; border: 2px solid #dcdfe6; border-radius: 12px; display: flex; align-items: center; justify-content: space-between; padding: 0 28px 0 24px; }
.select .ic { color: #8a8d93; }
.select.focus { box-shadow: 0 0 0 4px #f9fafd, 0 0 0 8px #3565c5; }
.match { margin-top: 48px; height: 839px; border: 2px solid #dcdfe6; border-radius: 16px; background: #fefefe; padding: 48px; box-shadow: 0 2px 4px rgba(0,0,0,.05); }
.match.next { margin-top: 25px; }
.m-row { display: flex; align-items: center; height: 92px; }
.m-row strong { font-size: 32px; font-weight: 600; letter-spacing: -.8px; width: 91px; margin-left: 15px; }
.pill { height: 52px; border-radius: 26px; padding: 6px 22px; line-height: 40px; font-weight: 600; color: #fff; display: flex; align-items: center; }
.pill.round { padding: 6px 21px; }
.pill.outline { width: 224px; height: 92px; border-radius: 46px; border: 2px solid #dcdfe6; padding: 0 21px; color: #1d2430; white-space: normal; margin-right: 16px; font-size: 27px; letter-spacing: -.3px; line-height: 39px; }
.teal { background: #5cb9b9; } .orange { background: #da622c; }
.trash { width: 27px; height: 30px; color: #667085; margin: -28px 0 0 16px; }
.m-row2 { display: flex; gap: 16px; margin-top: 4px; }
.m-row2 .ic { margin-right: 8px; }
.pair { margin-top: 32px; height: 243px; border: 2px solid #dcdfe6; border-radius: 12px; display: flex; align-items: center; padding-left: 24px; }
.pair + .pair { margin-top: 25px; height: 292px; }
.pair > .ic { color: #667085; margin-right: 15px; }
.who { flex: none; width: 100px; color: #667085; line-height: 40px; }
.names { flex: none; width: 169px; font-size: 32px; font-weight: 500; line-height: 48px; }
.conf { flex: none; width: 194px; height: 76px; border-radius: 38px; background: #4ca154; color: #fff; font-size: 24px; font-weight: 600; line-height: 32px; padding: 5px 22px; }
.conf i { display: block; font-family: "DejaVu Sans", sans-serif; height: 32px; }
.ok { flex: none; width: 64px; height: 64px; border-radius: 12px; background: #4ca154; color: #fff; display: flex; align-items: center; justify-content: center; }
.no { flex: none; width: 80px; display: flex; justify-content: center; }
.two .ic.s10 { width: 8px; }
.two .names { width: 203px; }
```
